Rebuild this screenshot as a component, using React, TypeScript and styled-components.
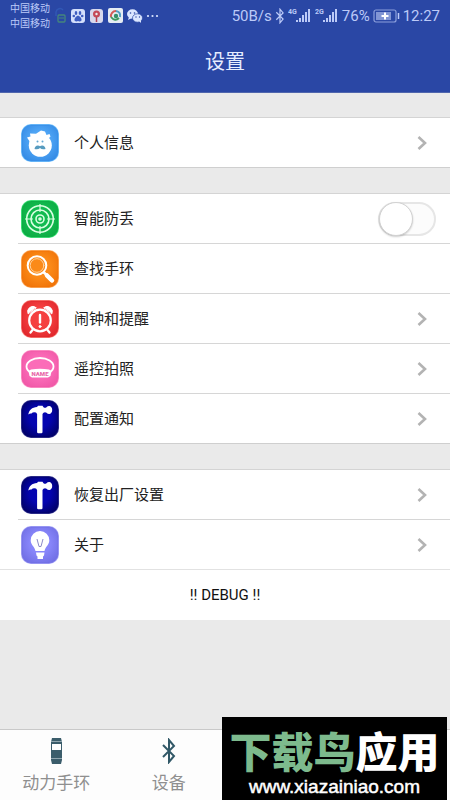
import React, { useState } from "react";
import styled, { createGlobalStyle, css } from "styled-components";

const GlobalStyle = createGlobalStyle`
  * { box-sizing: border-box; }
  body {
    margin: 0;
    background: #eaeaea;
    font-family: Roboto, "Noto Sans CJK SC", sans-serif;
    color: #222;
  }
`;

const Page = styled.div`
  display: flex;
  flex-direction: column;
  min-height: 100vh;
  background: #eaeaea;
`;

const Header = styled.header`
  background: #2a47a5;
  color: #e6edff;
  border-bottom: 1px solid #5066ad;
`;

const StatusBar = styled.div`
  display: flex;
  align-items: center;
  justify-content: space-between;
  height: 32px;
  padding: 0 10px;
  color: #bccaf8;
`;

const StatusGroup = styled.div`
  display: flex;
  align-items: center;
  gap: 3px;
  svg { display: block; flex: none; }
`;

const Carriers = styled.div`
  font-size: 10px;
  line-height: 15px;
`;

const StatusText = styled.span`
  font-size: 15px;
  line-height: 20px;
`;

const Title = styled.h1`
  margin: 0;
  height: 60px;
  font-size: 20px;
  line-height: 60px;
  font-weight: 400;
  text-align: center;
`;

const Main = styled.main`
  flex: 1;
  display: flex;
  flex-direction: column;
  gap: 25px;
  padding: 24px 0;
`;

const Group = styled.section<{ $open?: boolean }>`
  background: #fff;
  border-top: 1px solid #d4d4d4;
  border-bottom: ${(p) => (p.$open ? "0" : "1px solid #cfcfcf")};
`;

const rowLayout = css<{ $divided?: boolean }>`
  display: flex;
  align-items: center;
  gap: 14px;
  height: ${(p) => (p.$divided ? 50 : 49)}px;
  width: calc(100% - 18px);
  margin: 0 0 0 18px;
  padding: 0 14px 0 2px;
  font-family: inherit;
  font-size: 15px;
  line-height: 24px;
  color: #222;
  text-align: left;
  background: none;
  border: 0;
  border-top: ${(p) => (p.$divided ? "1px solid #d6d6d6" : "0")};
  > svg { display: block; flex: none; }
`;

const RowButton = styled.button<{ $divided?: boolean }>`
  ${rowLayout}
`;

const RowLabel = styled.label<{ $divided?: boolean }>`
  ${rowLayout}
`;

const RowText = styled.span`
  flex: 1;
`;

const Switch = styled.input`
  appearance: none;
  display: flex;
  align-items: center;
  width: 58px;
  height: 34px;
  margin: 0;
  border: 2px solid #e6e6e6;
  border-radius: 17px;
  background: #fcfcfc;
  &::before {
    content: "";
    width: 32px;
    height: 32px;
    margin: 0 -1px;
    border: 1px solid #d2d2d2;
    border-radius: 50%;
    background: #fff;
    box-shadow: 0 1px 2px rgba(0, 0, 0, 0.2);
  }
  &:checked {
    justify-content: flex-end;
    background: #4cd964;
  }
`;

const DebugButton = styled.button`
  display: block;
  width: 100%;
  height: 51px;
  border: 0;
  border-top: 1px solid #e2e2e2;
  background: #fff;
  color: #111;
  font-family: inherit;
  font-size: 15px;
`;

const TabBar = styled.nav`
  position: sticky;
  bottom: 0;
  display: grid;
  grid-template-columns: repeat(4, 1fr);
  height: 71px;
  background: #fdfdfd;
  border-top: 1px solid #c9c9c9;
`;

const Tab = styled.a`
  display: flex;
  flex-direction: column;
  align-items: center;
  gap: 6px;
  padding-top: 7px;
  color: #8f8f8f;
  font-size: 17px;
  line-height: 24px;
  text-decoration: none;
  svg { display: block; }
`;

const TabGlyph = styled.span`
  display: flex;
  align-items: center;
  justify-content: center;
  height: 28px;
  color: #315867;
`;

const Banner = styled.aside`
  position: fixed;
  right: 3px;
  bottom: 0;
  width: 225px;
  height: 83px;
  padding-top: 10px;
  background: #000;
  color: #fff;
  text-align: center;
  white-space: nowrap;
`;

const BannerName = styled.div`
  font-family: "Noto Sans CJK SC", sans-serif;
  font-size: 42px;
  line-height: 46px;
  font-weight: 900;
  font-style: oblique 6deg;
`;

const BannerAccent = styled.span`
  color: #7dba8d;
`;

const BannerUrl = styled.div`
  font-family: "Liberation Sans", Arial, sans-serif;
  font-size: 19px;
  line-height: 27px;
  -webkit-text-stroke: 0.5px #fff;
`;

type Kind = "person" | "target" | "search" | "alarm" | "band" | "hammer" | "bulb";

const tileColors: Record<Kind, [string, string, string]> = {
  person: ["#4fa5f5", "#2f86e2", "#7cc8ff"],
  target: ["#12bb50", "#0aa840", "#4ff08a"],
  search: ["#fb8a18", "#ee6e04", "#ffb36b"],
  alarm: ["#f54040", "#dc2228", "#ff8a80"],
  band: ["#fb6cb8", "#ee54a4", "#ff9dcc"],
  hammer: ["#0404b0", "#00005c", "#3b3b9c"],
  bulb: ["#8886fa", "#6c6ae0", "#a9a7fa"],
};

const glyphs: Record<Kind, React.ReactNode> = {
  person: (
    <g>
      <circle cx="20.300" cy="22.300" r="11.500" fill="#fff" />
      <path d="M10 19l-3-4.500 3.500-1-.5-3 6 .3 5-3.300 4 1 1.500 3.500 3-1 1 2.500-3 3z" fill="#fff" />
      <path d="M14.500 26q.5-3.500 3.300-3.500 1.500 0 2.200.8.700-.8 2.200-.8 2.800 0 3.300 3.500-3.500 1-5.500-1-2 2-5.500 1z" fill="#579bbf" />
      <circle cx="17.500" cy="18.500" r="1" fill="#63a7d2" />
      <circle cx="22.500" cy="18.500" r="1" fill="#63a7d2" />
    </g>
  ),
  target: (
    <g fill="none" stroke="#d9ffe2" strokeWidth="1.600">
      <circle cx="20" cy="20" r="13.300" />
      <circle cx="20" cy="20" r="9" />
      <circle cx="20" cy="20" r="4" />
      <circle cx="20" cy="20" r="1" fill="#d9ffe2" />
      <path d="M20 5v8M20 27v8M5 20h8M27 20h8" strokeWidth="1.200" />
    </g>
  ),
  search: (
    <g fill="none" stroke="#fff" strokeLinecap="round">
      <circle cx="17" cy="16.500" r="9.300" strokeWidth="2" />
      <circle cx="17" cy="16.500" r="6.800" stroke="#ffd29c" strokeWidth="1" />
      <path d="M24 23.500l2.500 2.500" strokeWidth="2.500" />
      <path d="M27 26.500l5 5" strokeWidth="4.500" />
    </g>
  ),
  alarm: (
    <g fill="none" stroke="#fff" strokeLinecap="round">
      <circle cx="20" cy="21.500" r="10.800" strokeWidth="2.200" />
      <path d="M8 14.500a5.200 5.200 0 0 1 8-6zM32 14.500a5.200 5.200 0 0 0-8-6z" fill="#fff" strokeWidth="1" />
      <path d="M12.500 31l-2 2.500M27.500 31l2 2.500" strokeWidth="2.300" />
      <path d="M20 16v7.500" strokeWidth="2.400" />
      <circle cx="20" cy="27.500" r="1" fill="#fff" strokeWidth="1" />
    </g>
  ),
  band: (
    <g>
      <ellipse cx="20" cy="17.500" rx="13.500" ry="8.500" fill="none" stroke="#fff" strokeWidth="1.800" />
      <path d="M11 20.500q9-1.500 18 0l2.500 1.500-1 5-2.500 1.500H12L9.500 27l-1-5z" fill="#fff" />
      <text x="20" y="27" fill="#e868a8" fontFamily="Roboto, sans-serif" fontSize="6" fontWeight="900" textAnchor="middle">NAME</text>
    </g>
  ),
  hammer: (
    <path
      d="M8.300 15.500C9 11 12 8.300 17 8l1-1.200h4.500l1 1.500q1.500 1 3 0 1.200-1.500 3-1.300 2.700.8 2.700 4 0 3.200-2.700 4-1.800.2-3-1.300-1.500-1-3 0l-1 1.300v18q0 1.200-1.200 1.200h-3q-1.200 0-1.200-1.200v-18L16 13.500q-3-1-4.500 1-1.500-.5-3.200 1z"
      fill="#fff"
    />
  ),
  bulb: (
    <g>
      <path d="M20 6a9.300 9.300 0 0 1 9.300 9.300c0 4.700-3.800 6.200-4.800 10.700h-9c-1-4.500-4.800-6-4.800-10.700A9.300 9.300 0 0 1 20 6z" fill="#fff" />
      <path d="M16 27.500h8.500l-.5 3-1 1v2.500h-5.500v-2.500l-1-1z" fill="#fff" />
      <path d="M17 14l2 7.500h2l2-7.500" fill="none" stroke="#8c8ac9" strokeWidth="1" />
    </g>
  ),
};

function TileIcon({ kind, id }: { kind: Kind; id: string }) {
  const [base, dark, light] = tileColors[kind];
  return (
    <svg width="40" height="40" viewBox="0 0 40 40" aria-hidden="true">
      <defs>
        <radialGradient id={id} cx=".5" cy=".45" r=".7">
          <stop offset=".4" stopColor={base} />
          <stop offset="1" stopColor={dark} />
        </radialGradient>
      </defs>
      <rect x="1" y="1" width="38" height="38" rx="10" fill={light} />
      <rect x="2" y="2" width="36" height="36" rx="9" fill={`url(#${id})`} stroke={dark} strokeOpacity=".6" />
      {glyphs[kind]}
    </svg>
  );
}

function Chevron() {
  return (
    <svg width="28" height="20" viewBox="0 0 28 20" fill="none" stroke="#b3b3b3" strokeWidth="2.600" aria-hidden="true">
      <path d="M10.500 4l6.500 6-6.500 6" />
    </svg>
  );
}

function BluetoothGlyph({ width, height, weight }: { width: number; height: number; weight: number }) {
  return (
    <svg width={width} height={height} viewBox="0 0 14 26" fill="none" stroke="currentColor" strokeWidth={weight} aria-hidden="true">
      <path d="M1 7l11 11-5 6V2l5 6L1 19" />
    </svg>
  );
}

function Signal({ network }: { network: string }) {
  return (
    <svg width="24" height="18" viewBox="0 0 24 18" fill="currentColor" aria-hidden="true">
      <text x="0" y="7" fontFamily="Roboto, sans-serif" fontSize="7" fontWeight="700">{network}</text>
      <path d="M8 13h2v2H8zM11 11h2v4h-2zM14 8h2v7h-2zM17 5h2v10h-2zM20 2h2v13h-2z" />
    </svg>
  );
}

function AppBadges() {
  return (
    <svg width="106" height="20" viewBox="0 0 106 20" aria-hidden="true">
      <path d="M3 10V6a4 4 0 0 1 7-2" fill="none" stroke="#3158b5" strokeWidth="1.500" />
      <rect x="5" y="9" width="7" height="7" rx="1" fill="none" stroke="#45877c" strokeWidth="1.300" />
      <path d="M6 12h5" stroke="#45877c" />
      <rect x="18" y="3" width="14" height="14" rx="3" fill="#d4dffb" />
      <g fill="#3d5cc0">
        <ellipse cx="23" cy="7" rx="1.300" ry="2" />
        <ellipse cx="27" cy="7" rx="1.300" ry="2" />
        <circle cx="20.800" cy="10" r="1.300" />
        <circle cx="29.200" cy="10" r="1.300" />
        <path d="M25 9.500q4 2 3.500 5-1.500 1.500-3.500.5-2 1-3.500-.5-.5-3 3.500-5z" />
      </g>
      <rect x="37" y="3" width="13" height="14" rx="3" fill="#d8d9ed" />
      <circle cx="43.500" cy="8" r="3.500" fill="#c44a59" />
      <circle cx="43.500" cy="8" r="1.200" fill="#eee" />
      <path d="M43.500 11v5" stroke="#b33f50" strokeWidth="1.500" />
      <rect x="55" y="2" width="15" height="15" rx="2" fill="#e5ecf3" />
      <g fill="none" strokeWidth="2">
        <path d="M58 11a5 5 0 0 1 5-6" stroke="#d35b58" />
        <path d="M63 5q5 1 4 6" stroke="#4f9dc2" />
        <path d="M66 12q-4 4-8-1" stroke="#3d9b60" />
      </g>
      <circle cx="63" cy="10" r="2.200" fill="#34906b" />
      <g fill="#dbe6ff">
        <ellipse cx="79.500" cy="8" rx="5.500" ry="4.700" />
        <path d="M76 11l-1 3 4-2z" />
        <ellipse cx="84.500" cy="12" rx="5" ry="4.200" stroke="#2a47a5" strokeWidth=".7" />
        <path d="M86 15l2 2 0-3z" />
        <circle cx="95" cy="10" r="1.100" />
        <circle cx="99.500" cy="10" r="1.100" />
        <circle cx="104" cy="10" r="1.100" />
      </g>
      <g fill="#2a47a5">
        <circle cx="77.500" cy="7" r=".8" />
        <circle cx="81.500" cy="7" r=".8" />
        <circle cx="83" cy="11" r=".7" />
        <circle cx="86.500" cy="11" r=".7" />
      </g>
    </svg>
  );
}

function Battery() {
  return (
    <svg width="27" height="14" viewBox="0 0 27 14" aria-hidden="true">
      <rect x="1" y="1" width="22" height="12" rx="2" fill="none" stroke="#8c9fdc" strokeWidth="1.200" />
      <rect x="3" y="3" width="15" height="8" fill="#8195d4" />
      <path d="M25.500 4v6" stroke="#bccaf8" strokeWidth="1.500" />
      <path d="M12 3.500v7M8.500 7h7" stroke="#fff" strokeWidth="2" />
    </svg>
  );
}

function WatchIcon() {
  return (
    <svg width="26" height="28" viewBox="0 0 26 28" aria-hidden="true">
      <path d="M9 1h9l1 4v18l-1 4H9l-1-4V5z" fill="#3b5d6b" />
      <path d="M9 7h9v6H9z" fill="#fff" />
      <path d="M8 4.500h11M8 21.500h11" stroke="#91a6af" />
    </svg>
  );
}

const items: { kind: Kind; text: string; arrow: boolean }[] = [
  { kind: "search", text: "查找手环", arrow: false },
  { kind: "alarm", text: "闹钟和提醒", arrow: true },
  { kind: "band", text: "遥控拍照", arrow: true },
  { kind: "hammer", text: "配置通知", arrow: true },
];

export default function App() {
  const [guard, setGuard] = useState(false);
  return (
    <Page>
      <GlobalStyle />
      <Header>
        <StatusBar>
          <StatusGroup>
            <Carriers>
              <div>中国移动</div>
              <div>中国移动</div>
            </Carriers>
            <AppBadges />
          </StatusGroup>
          <StatusGroup>
            <StatusText>50B/s</StatusText>
            <BluetoothGlyph width={10} height={16} weight={2} />
            <Signal network="4G" />
            <Signal network="2G" />
            <StatusText>76%</StatusText>
            <Battery />
            <StatusText>12:27</StatusText>
          </StatusGroup>
        </StatusBar>
        <Title>设置</Title>
      </Header>
      <Main>
        <Group>
          <RowButton type="button">
            <TileIcon kind="person" id="tile-person" />
            <RowText>个人信息</RowText>
            <Chevron />
          </RowButton>
        </Group>
        <Group>
          <RowLabel>
            <TileIcon kind="target" id="tile-target" />
            <RowText>智能防丢</RowText>
            <Switch type="checkbox" role="switch" checked={guard} onChange={(e) => setGuard(e.target.checked)} />
          </RowLabel>
          {items.map((item) => (
            <RowButton key={item.kind} type="button" $divided>
              <TileIcon kind={item.kind} id={`tile-${item.kind}`} />
              <RowText>{item.text}</RowText>
              {item.arrow && <Chevron />}
            </RowButton>
          ))}
        </Group>
        <Group $open>
          <RowButton type="button">
            <TileIcon kind="hammer" id="tile-reset" />
            <RowText>恢复出厂设置</RowText>
            <Chevron />
          </RowButton>
          <RowButton type="button" $divided>
            <TileIcon kind="bulb" id="tile-bulb" />
            <RowText>关于</RowText>
            <Chevron />
          </RowButton>
          <DebugButton type="button">!! DEBUG !!</DebugButton>
        </Group>
      </Main>
      <TabBar>
        <Tab href="#band">
          <TabGlyph><WatchIcon /></TabGlyph>
          动力手环
        </Tab>
        <Tab href="#devices">
          <TabGlyph><BluetoothGlyph width={14} height={26} weight={2} /></TabGlyph>
          设备
        </Tab>
      </TabBar>
      <Banner>
        <BannerName><BannerAccent>下载鸟</BannerAccent>应用</BannerName>
        <BannerUrl>www.xiazainiao.com</BannerUrl>
      </Banner>
    </Page>
  );
}
